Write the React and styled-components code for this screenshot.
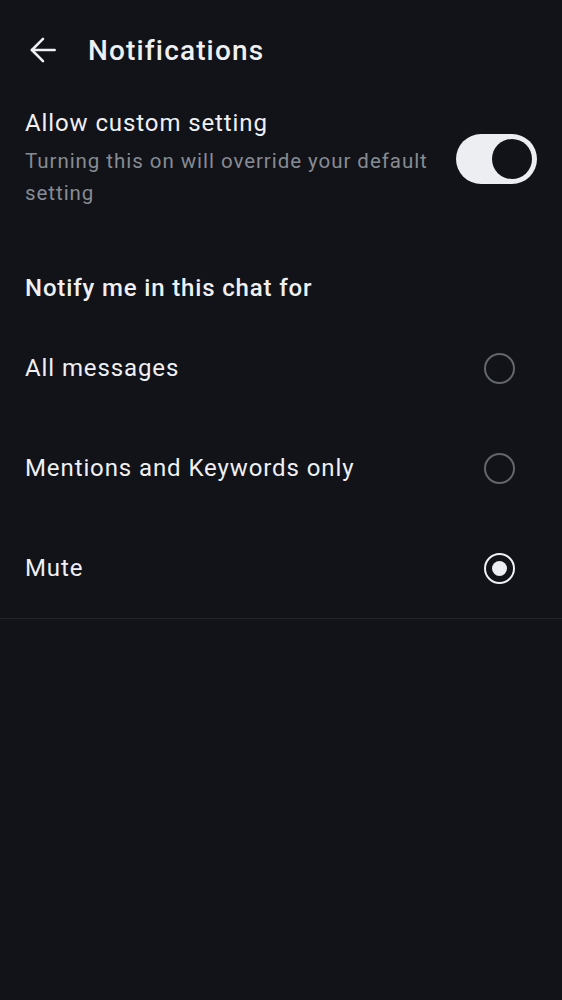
import React, { useState } from 'react';
import styled, { createGlobalStyle } from 'styled-components';

const Global = createGlobalStyle`
  html, body {
    margin: 0;
    padding: 0;
    background: #111318;
  }
  body {
    font-family: Roboto, "Noto Sans", sans-serif;
    color: #e6e8ec;
  }
`;

const Page = styled.div`
  width: 562px;
  min-height: 1000px;
  background: #111318;
`;

const Header = styled.div`
  height: 100px;
  display: flex;
  align-items: center;
  padding-left: 29px;
  gap: 31px;
`;

const BackButton = styled.button`
  width: 28px;
  height: 28px;
  padding: 0;
  border: none;
  background: none;
  display: flex;
  align-items: center;
  justify-content: center;
  color: #eef0f4;
`;

const Title = styled.h1`
  margin: 0;
  font-size: 28px;
  font-weight: 500;
  color: #eef0f4;
  letter-spacing: 1.15px;
`;

const SettingRow = styled.div`
  display: flex;
  align-items: center;
  justify-content: space-between;
  padding: 8px 25px 0 25px;
  gap: 24px;
`;

const SettingText = styled.div`
  display: flex;
  flex-direction: column;
  gap: 7px;
`;

const SettingLabel = styled.div`
  font-size: 24px;
  line-height: 30px;
  letter-spacing: 0.9px;
  color: #eef0f4;
`;

const SettingHint = styled.div`
  font-size: 20.5px;
  line-height: 32px;
  letter-spacing: 0.95px;
  color: #878b93;
`;

const Toggle = styled.button`
  flex-shrink: 0;
  width: 81px;
  height: 50px;
  border-radius: 25px;
  border: none;
  padding: 0 5px;
  background: #eceef2;
  display: flex;
  align-items: center;
  justify-content: ${p => (p.$on ? 'flex-end' : 'flex-start')};
`;

const Thumb = styled.span`
  width: 40px;
  height: 40px;
  border-radius: 50%;
  background: #111318;
`;

const SectionHeading = styled.div`
  margin: 64px 25px 15px;
  font-size: 24px;
  line-height: 30px;
  font-weight: 500;
  letter-spacing: 0.85px;
  color: #eef0f4;
`;

const OptionList = styled.div`
  border-bottom: 1px solid #23262c;
`;

const OptionRow = styled.label`
  height: 100px;
  display: flex;
  align-items: center;
  justify-content: space-between;
  padding: 0 47px 0 25px;
  cursor: pointer;
`;

const OptionLabel = styled.span`
  font-size: 24px;
  letter-spacing: 0.9px;
  color: #eef0f4;
`;

const Radio = styled.span`
  box-sizing: border-box;
  width: 31px;
  height: 31px;
  border-radius: 50%;
  border: 2.5px solid ${p => (p.$checked ? '#eef0f4' : '#62666d')};
  display: flex;
  align-items: center;
  justify-content: center;
  &::after {
    content: '';
    width: 15px;
    height: 15px;
    border-radius: 50%;
    background: #eceef2;
    display: ${p => (p.$checked ? 'block' : 'none')};
  }
`;

const options = ['All messages', 'Mentions and Keywords only', 'Mute'];

export default function App() {
  const [custom, setCustom] = useState(true);
  const [choice, setChoice] = useState('Mute');

  return (
    <Page>
      <Global />
      <Header>
        <BackButton aria-label="Back">
          <svg width="28" height="28" viewBox="0 0 24 24" fill="none" stroke="currentColor" strokeWidth="2.2" strokeLinecap="round" strokeLinejoin="round">
            <path d="M22 12H2.5" />
            <path d="M12 2.5L2.5 12l9.5 9.5" />
          </svg>
        </BackButton>
        <Title>Notifications</Title>
      </Header>

      <SettingRow>
        <SettingText>
          <SettingLabel>Allow custom setting</SettingLabel>
          <SettingHint>Turning this on will override your default setting</SettingHint>
        </SettingText>
        <Toggle $on={custom} onClick={() => setCustom(!custom)} aria-label="Allow custom setting">
          <Thumb />
        </Toggle>
      </SettingRow>

      <SectionHeading>Notify me in this chat for</SectionHeading>

      <OptionList>
        {options.map(o => (
          <OptionRow key={o} onClick={() => setChoice(o)}>
            <OptionLabel>{o}</OptionLabel>
            <Radio $checked={choice === o} />
          </OptionRow>
        ))}
      </OptionList>
    </Page>
  );
}
